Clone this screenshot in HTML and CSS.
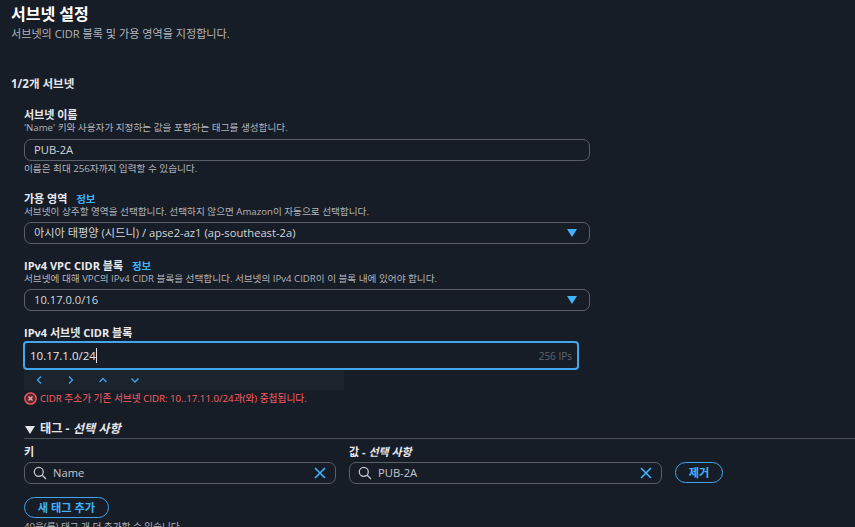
FILE: index.html
```html
<!DOCTYPE html>
<html lang="ko">
<head>
<meta charset="utf-8">
<title>서브넷 설정</title>
<link rel="stylesheet" href="styles.css">
</head>
<body>
<main class="page">
  <header class="head">
    <h1>서브넷 설정</h1>
    <p class="sub">서브넷의 CIDR 블록 및 가용 영역을 지정합니다.</p>
  </header>
  <h2 class="count">1/2개 서브넷</h2>
  <section class="form">
    <div class="field f1">
      <div class="label">서브넷 이름</div>
      <div class="desc">'Name' 키와 사용자가 지정하는 값을 포함하는 태그를 생성합니다.</div>
      <div class="box">PUB-2A</div>
      <div class="desc help">이름은 최대 256자까지 입력할 수 있습니다.</div>
    </div>
    <div class="field f2">
      <div class="label">가용 영역 <a class="info">정보</a></div>
      <div class="desc">서브넷이 상주할 영역을 선택합니다. 선택하지 않으면 Amazon이 자동으로 선택합니다.</div>
      <div class="box select">아시아 태평양 (시드니) / apse2-az1 (ap-southeast-2a)<svg class="caret" width="10" height="8" viewBox="0 0 10 8"><path d="M0 0h10L5 8z"/></svg></div>
    </div>
    <div class="field f3">
      <div class="label">IPv4 VPC CIDR 블록 <a class="info">정보</a></div>
      <div class="desc">서브넷에 대해 VPC의 IPv4 CIDR 블록을 선택합니다. 서브넷의 IPv4 CIDR이 이 블록 내에 있어야 합니다.</div>
      <div class="box select">10.17.0.0/16<svg class="caret" width="10" height="8" viewBox="0 0 10 8"><path d="M0 0h10L5 8z"/></svg></div>
    </div>
    <div class="field f4">
      <div class="label">IPv4 서브넷 CIDR 블록</div>
      <div class="cidr"><span class="value">10.17.1.0/24<i class="cursor"></i></span><span class="ips">256 IPs</span></div>
      <div class="steppers">
        <svg width="16" height="16" viewBox="0 0 16 16"><path d="M10 4.500 6.500 8l3.500 3.500"/></svg>
        <svg width="16" height="16" viewBox="0 0 16 16"><path d="M6 4.500 9.500 8 6 11.500"/></svg>
        <svg width="16" height="16" viewBox="0 0 16 16"><path d="M4.500 10 8 6.500l3.500 3.500"/></svg>
        <svg width="16" height="16" viewBox="0 0 16 16"><path d="M4.500 6.500 8 10l3.500-3.500"/></svg>
      </div>
      <div class="error">
        <svg width="13" height="13" viewBox="0 0 13 13"><circle cx="6.500" cy="6.500" r="5.700"/><path d="m4.500 4.500 4 4m0-4-4 4"/></svg>
        <span>CIDR 주소가 기존 서브넷 CIDR: 10..17.11.0/24과(와) 중첩됩니다.</span>
      </div>
    </div>
    <div class="tags">
      <div class="tags-head"><svg width="10" height="8" viewBox="0 0 10 8"><path d="M0 0h10L5 8z"/></svg><span>태그 - <em>선택 사항</em></span></div>
      <div class="tag-labels">
        <div class="label">키</div>
        <div class="label">값 - <em>선택 사항</em></div>
      </div>
      <div class="tag-row">
        <div class="box search">
          <svg class="mag" width="14" height="14" viewBox="0 0 14 14"><circle cx="5.800" cy="5.800" r="4.500"/><path d="m9 9 4 4"/></svg>
          <span>Name</span>
          <svg class="clear" width="14" height="14" viewBox="0 0 14 14"><path d="m2 2 10 10M12 2 2 12"/></svg>
        </div>
        <div class="box search">
          <svg class="mag" width="14" height="14" viewBox="0 0 14 14"><circle cx="5.800" cy="5.800" r="4.500"/><path d="m9 9 4 4"/></svg>
          <span>PUB-2A</span>
          <svg class="clear" width="14" height="14" viewBox="0 0 14 14"><path d="m2 2 10 10M12 2 2 12"/></svg>
        </div>
        <button class="btn remove">제거</button>
      </div>
      <button class="btn add">새 태그 추가</button>
      <div class="desc limit">40을(를) 태그 개 더 추가할 수 있습니다.</div>
    </div>
  </section>
</main>
</body>
</html>
```
FILE: styles.css
```css
* { box-sizing: border-box; }
html, body { margin: 0; height: 527px; overflow: hidden; background: #161d26; }
body { font-family: "Open Sans", "Noto Sans CJK KR", sans-serif; color: #c6c6cd; font-size: 11px; }
.page { padding: 2px 0 0 11px; }
h1 { margin: 0; font-size: 16px; line-height: 24px; font-weight: 700; color: #fff; }
.sub { margin: 0; font-size: 11.100px; line-height: 16px; color: #b4b4bb; }
.count { margin: 34px 0 0; font-size: 11.500px; line-height: 16px; font-weight: 700; color: #e6e6ea; }
.form { padding-left: 13px; margin-top: 15px; }
.field { width: 566px; }
.label { font-size: 11px; line-height: 16px; margin-bottom: -2px; font-weight: 700; color: #eaeaee; }
.label em, .tags-head em { font-style: italic; }
.desc { font-size: 9.650px; line-height: 14px; color: #b4b4bb; }
.info { font-weight: 700; color: #42b4ff; margin-left: 6px; font-size: 10.500px; }
.box { height: 22px; border: 1px solid #5b5f68; border-radius: 7px; padding-left: 9px; font-size: 11.200px; line-height: 20px; color: #d5d5da; display: flex; align-items: center; }
.f1 .box { margin-top: 4px; }
.help { margin-top: 1px; }
.f2 { margin-top: 15px; }
.f2 .box, .f3 .box { margin-top: 3px; }
.f3 { margin-top: 14px; }
.f4 { margin-top: 14px; width: 555px; }
.select { justify-content: space-between; padding-right: 12px; }
.caret path { fill: #42b4ff; }
.cidr { margin: 2px 0 0 -1px; height: 29px; border: 2px solid #42a5ee; border-radius: 4px; padding: 0 5px; display: flex; align-items: center; justify-content: space-between; }
.value { font-size: 11.500px; color: #e6e6ea; display: flex; align-items: center; }
.cursor { width: 1px; height: 15px; background: #e6e6ea; }
.ips { font-size: 10px; color: #5f6670; }
.steppers { width: 320px; height: 20px; background: #1b232d; display: flex; align-items: center; gap: 16px; padding-left: 7px; }
.steppers path { fill: none; stroke: #42a5ee; stroke-width: 1.300; }
.error { margin-top: 1px; height: 14px; display: flex; align-items: center; gap: 3px; font-size: 9.700px; color: #ff5d64; }
.error circle { fill: #5a2a30; stroke: #ff5d64; stroke-width: 1.300; }
.error svg path { stroke: #ff9a9e; stroke-width: 1.500; fill: none; }
.tags { margin-top: 17px; }
.tags-head { height: 17px; width: 831px; border-bottom: 1px solid #4a4e57; display: flex; align-items: flex-start; gap: 5px; font-size: 12.200px; line-height: 14px; font-weight: 700; color: #e6e6ea; }
.tags-head svg { margin: 4px 0 0 1px; }
.tags-head path { fill: #e6e6ea; }
.tag-labels { display: grid; grid-template-columns: 325px 1fr; margin-top: 5px; }
.tag-row { display: flex; align-items: flex-start; margin-top: 4px; }
.search { width: 312px; padding-left: 8px; padding-right: 8px; gap: 6px; margin-right: 13px; color: #c6c6cd; }
.search + .search { width: 313px; }
.mag circle, .mag path { fill: none; stroke: #c6c6cd; stroke-width: 1.300; }
.clear { margin-left: auto; }
.clear path { fill: none; stroke: #42b4ff; stroke-width: 1.600; }
.btn { display: block; border: 1px solid #42a5ee; border-radius: 12px; background: transparent; color: #42b4ff; font: 700 11.200px/18px "Open Sans", "Noto Sans CJK KR", sans-serif; padding: 0; }
.remove { width: 48px; height: 21px; }
.add { width: 85px; height: 21px; margin-top: 13px; }
.limit { margin-top: 2px; }
```
